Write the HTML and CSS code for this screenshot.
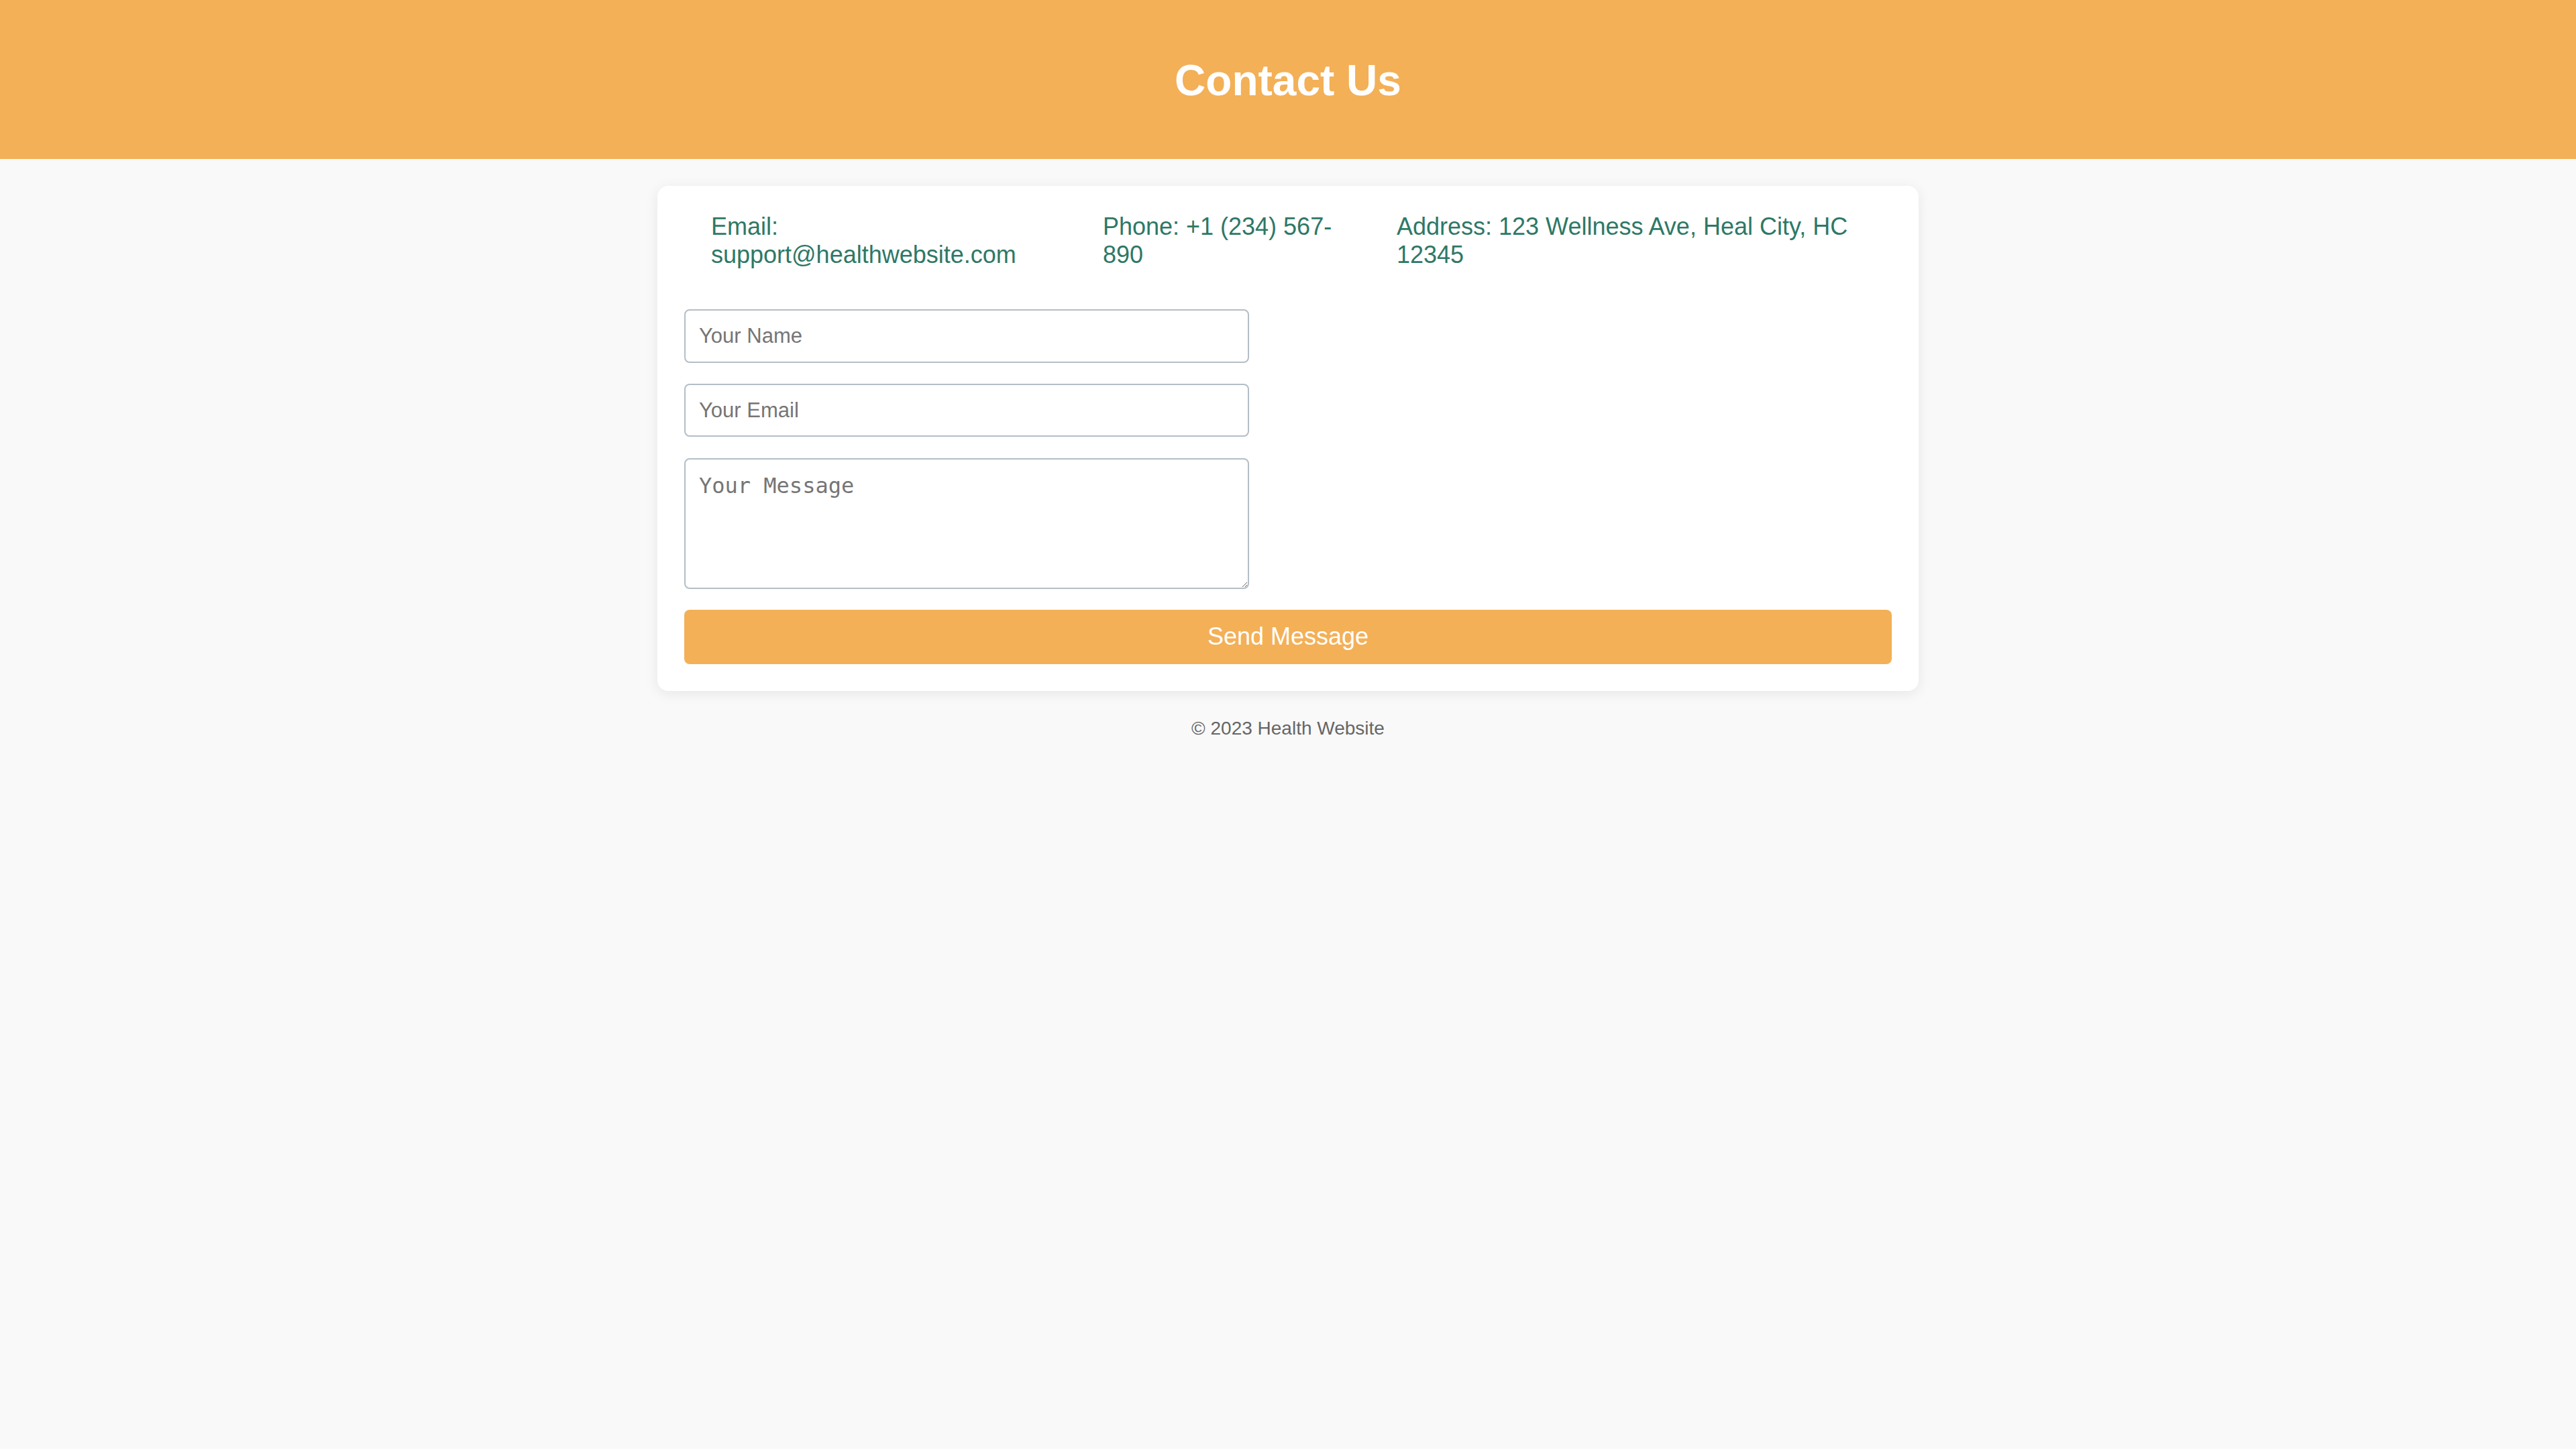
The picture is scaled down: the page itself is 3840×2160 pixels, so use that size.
FILE: index.html
```html
<!DOCTYPE html>
<html lang="en">
<head>
<meta charset="utf-8">
<title>Contact Us</title>
<link rel="stylesheet" href="styles.css">
</head>
<body>
<header class="site-header">
  <h1 class="title">Contact Us</h1>
</header>
<main class="card">
  <div class="info">
    <p class="info-item">Email: support@healthwebsite.com</p>
    <p class="info-item">Phone: +1 (234) 567-890</p>
    <p class="info-item">Address: 123 Wellness Ave, Heal City, HC 12345</p>
  </div>
  <form class="form">
    <input class="field" type="text" placeholder="Your Name">
    <input class="field" type="email" placeholder="Your Email">
    <textarea class="message" placeholder="Your Message"></textarea>
    <button class="send" type="button">Send Message</button>
  </form>
</main>
<footer class="footer">© 2023 Health Website</footer>
</body>
</html>
```
FILE: styles.css
```css
body {
  margin: 0;
  background: #f9f9f9;
  font-family: "Liberation Sans", Arial, sans-serif;
}

.site-header {
  background: #f3b057;
  padding: 40px;
  text-align: center;
  color: #ffffff;
}

.title {
  margin: 44px 0 40px;
  font-size: 64px;
  line-height: 73px;
  font-weight: bold;
}

.card {
  width: 1800px;
  padding: 40px;
  margin: 40px auto 0;
  background: #ffffff;
  border-radius: 16px;
  box-shadow: 0 4px 20px rgba(0, 0, 0, 0.08);
}

.info {
  display: flex;
  margin-bottom: 60px;
}

.info-item {
  margin: 0;
  padding: 0 40px;
  font-size: 36px;
  color: #2e7866;
}

.form {
  display: flex;
  flex-direction: column;
  align-items: flex-start;
  gap: 31.3px;
}

.field,
.message {
  -webkit-appearance: none;
  appearance: none;
  box-sizing: border-box;
  width: 842px;
  border: 2px solid #b3bec7;
  border-radius: 8px;
  background: #ffffff;
  color: #333333;
  margin: 0;
  outline: none;
  box-shadow: none;
}

.field {
  height: 79.5px;
  padding: 0 20px;
  font-family: "Liberation Sans", Arial, sans-serif;
  font-size: 31px;
}

.message {
  height: 195px;
  padding: 20px;
  font-family: "DejaVu Sans Mono", monospace;
  font-size: 32px;
  resize: vertical;
}

.field::placeholder,
.message::placeholder {
  color: #757575;
}

.send {
  align-self: stretch;
  height: 81px;
  border: none;
  border-radius: 8px;
  background: #f3b057;
  color: #ffffff;
  font-family: "Liberation Sans", Arial, sans-serif;
  font-size: 36px;
  margin: 0;
}

.footer {
  padding: 40px 0;
  text-align: center;
  font-size: 28px;
  color: #666666;
}
```
